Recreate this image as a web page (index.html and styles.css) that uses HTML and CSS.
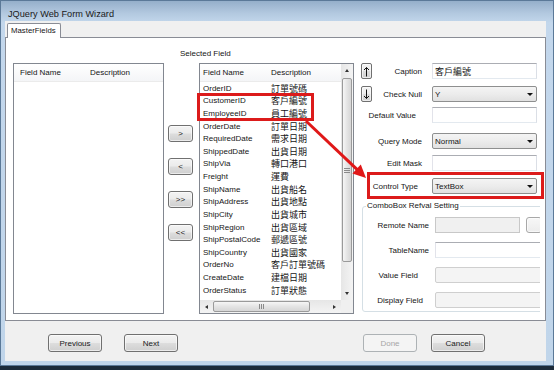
FILE: index.html
```html
<!DOCTYPE html>
<html>
<head>
<meta charset="utf-8">
<title>JQuery Web Form Wizard</title>
<link rel="stylesheet" href="styles.css">
</head>
<body>
<div class="window">
  <div class="titlebar">JQuery Web Form Wizard</div>
  <div class="client">
    <div class="tabstrip"><div class="tab">MasterFields</div></div>
    <div class="panel">
      <div class="listview left-list">
        <div class="lv-header left-cols"><span class="col1">Field Name</span><span class="col2">Description</span></div>
      </div>

      <div class="mid">
        <div class="sel-label">Selected Field</div>
        <div class="mid-row">
          <div class="move-btns">
            <div class="btn small">&gt;</div>
            <div class="btn small">&lt;</div>
            <div class="btn small">&gt;&gt;</div>
            <div class="btn small">&lt;&lt;</div>
          </div>
          <div class="listview sel-list">
            <div class="lv-main">
              <div class="lv-header sel-cols"><span class="col1">Field Name</span><span class="col2">Description</span></div>
              <div class="lv-row sel-cols"><span class="col1">OrderID</span><span class="col2 cjk">訂單號碼</span></div>
              <div class="lv-row sel-cols"><span class="col1">CustomerID</span><span class="col2 cjk">客戶編號</span></div>
              <div class="lv-row sel-cols"><span class="col1">EmployeeID</span><span class="col2 cjk">員工編號</span></div>
              <div class="lv-row sel-cols"><span class="col1">OrderDate</span><span class="col2 cjk">訂單日期</span></div>
              <div class="lv-row sel-cols"><span class="col1">RequiredDate</span><span class="col2 cjk">需求日期</span></div>
              <div class="lv-row sel-cols"><span class="col1">ShippedDate</span><span class="col2 cjk">出貨日期</span></div>
              <div class="lv-row sel-cols"><span class="col1">ShipVia</span><span class="col2 cjk">轉口港口</span></div>
              <div class="lv-row sel-cols"><span class="col1">Freight</span><span class="col2 cjk">運費</span></div>
              <div class="lv-row sel-cols"><span class="col1">ShipName</span><span class="col2 cjk">出貨船名</span></div>
              <div class="lv-row sel-cols"><span class="col1">ShipAddress</span><span class="col2 cjk">出貨地點</span></div>
              <div class="lv-row sel-cols"><span class="col1">ShipCity</span><span class="col2 cjk">出貨城市</span></div>
              <div class="lv-row sel-cols"><span class="col1">ShipRegion</span><span class="col2 cjk">出貨區域</span></div>
              <div class="lv-row sel-cols"><span class="col1">ShipPostalCode</span><span class="col2 cjk">郵遞區號</span></div>
              <div class="lv-row sel-cols"><span class="col1">ShipCountry</span><span class="col2 cjk">出貨國家</span></div>
              <div class="lv-row sel-cols"><span class="col1">OrderNo</span><span class="col2 cjk">客戶訂單號碼</span></div>
              <div class="lv-row sel-cols"><span class="col1">CreateDate</span><span class="col2 cjk">建檔日期</span></div>
              <div class="lv-row sel-cols"><span class="col1">OrderStatus</span><span class="col2 cjk">訂單狀態</span></div>
            </div>
            <div class="vscroll">
              <div class="sb-btn"><i class="tri up"></i></div>
              <div class="vtrack"><div class="vthumb"><span class="grip-h"></span></div></div>
              <div class="sb-btn"><i class="tri down"></i></div>
            </div>
            <div class="hscroll">
              <div class="sb-btn h"><i class="tri left"></i></div>
              <div class="htrack"><div class="hthumb"><span class="grip-v"></span></div></div>
              <div class="sb-btn h"><i class="tri right"></i></div>
            </div>
            <div class="corner"></div>
          </div>
        </div>
      </div>

      <div class="props">
        <div class="prow">
          <div class="plabel"><div class="btn arrowbtn"><svg width="7" height="11" viewBox="0 0 7 11"><path d="M3.5 1.5V10.5M1 4L3.5 1.5L6 4" stroke="#111" stroke-width="1" fill="none"/></svg></div><span>Caption</span></div>
          <div class="field textbox"><span class="cjk">客戶編號</span></div>
        </div>
        <div class="prow mt7">
          <div class="plabel"><div class="btn arrowbtn"><svg width="7" height="11" viewBox="0 0 7 11"><path d="M3.5 0.5V9.5M1 7L3.5 9.5L6 7" stroke="#111" stroke-width="1" fill="none"/></svg></div><span>Check Null</span></div>
          <div class="field combo"><span>Y</span><i class="caret"></i></div>
        </div>
        <div class="prow mt5">
          <div class="plabel pr6"><span>Default Value</span></div>
          <div class="field textbox"></div>
        </div>
        <div class="prow mt10">
          <div class="plabel mrneg3"><span>Query Mode</span></div>
          <div class="field combo"><span>Normal</span><i class="caret"></i></div>
        </div>
        <div class="prow mt6">
          <div class="plabel"><span>Edit Mask</span></div>
          <div class="field textbox"></div>
        </div>
        <div class="prow mt7">
          <div class="plabel pr4"><span>Control Type</span></div>
          <div class="field combo"><span>TextBox</span><i class="caret"></i></div>
        </div>

        <fieldset class="group">
          <legend>ComboBox Refval Setting</legend>
          <div class="grow first">
            <div class="glabel">Remote Name</div>
            <div class="gfield textbox disabled short"></div>
            <div class="btn dots"></div>
          </div>
          <div class="grow">
            <div class="glabel">TableName</div>
            <div class="gfield textbox wide"></div>
          </div>
          <div class="grow">
            <div class="glabel pr11">Value Field</div>
            <div class="gfield combo disabled wide"><span></span><i class="caret gray"></i></div>
          </div>
          <div class="grow">
            <div class="glabel pr6">Display Field</div>
            <div class="gfield combo disabled wide"><span></span><i class="caret gray"></i></div>
          </div>
        </fieldset>
      </div>
    </div>
    <div class="footer">
      <div class="btn wide">Previous</div>
      <div class="btn wide next">Next</div>
      <div class="btn wide done disabledbtn">Done</div>
      <div class="btn wide cancel">Cancel</div>
    </div>
  </div>
</div>

<svg class="annot" width="554" height="370" viewBox="0 0 554 370">
  <rect x="198.5" y="94.5" width="114" height="25" fill="none" stroke="#dc1b1b" stroke-width="3"/>
  <rect x="368.5" y="173.5" width="174" height="24" fill="none" stroke="#dc1b1b" stroke-width="3"/>
  <line x1="306" y1="121" x2="357.5" y2="169.8" stroke="#e01818" stroke-width="3"/>
  <polygon points="366,178 352.4,173.6 360.8,164.6" fill="#e01818"/>
</svg>
</body>
</html>
```

FILE: styles.css
```css
* { box-sizing: border-box; }
html, body { margin: 0; padding: 0; }
body {
  width: 554px;
  height: 370px;
  background: #1c2b3a;
  font-family: "Liberation Sans", Arial, sans-serif;
  font-size: 8px;
  color: #151515;
  position: relative;
  overflow: hidden;
}
.cjk {
  font-family: "Noto Sans CJK TC", "Noto Sans CJK SC", sans-serif;
  font-size: 9px;
}

/* window frame */
.window {
  width: 554px;
  height: 366px;
  border: 1px solid #5b7998;
  background: linear-gradient(#95afca 0px, #b2c8df 12px, #c3d7ec 22px, #c0d5ea 100%);
  display: flex;
  flex-direction: column;
}
.titlebar {
  height: 20px;
  padding: 7px 0 0 7px;
  font-size: 9.2px;
  line-height: 12px;
  color: #1a1a1a;
}
.client {
  margin: 0 7px 4px 4px;
  flex: 1;
  background: #f0f0f0;
  display: flex;
  flex-direction: column;
}

/* tabs */
.tabstrip {
  height: 16px;
  padding: 2px 0 0 2px;
  display: flex;
}
.tab {
  width: 54px;
  height: 15px;
  border: 1px solid #898c95;
  border-bottom: none;
  border-radius: 2px 2px 0 0;
  background: #fff;
  padding-left: 3px;
  font-size: 7.8px;
  line-height: 13px;
  position: relative;
  z-index: 1;
}
.panel {
  height: 284px;
  border: 1px solid #898c95;
  background: #fff;
  display: flex;
  align-items: flex-start;
  padding-left: 7px;
}

/* list views */
.listview {
  border: 1px solid #828790;
  background: #fff;
}
.left-list {
  width: 151px;
  height: 251px;
  margin-top: 25px;
}
.lv-header {
  height: 18px;
  display: flex;
  align-items: center;
  background: linear-gradient(#ffffff, #f4f5f7);
  border-bottom: 1px solid #ebebeb;
}
.left-cols { padding-left: 6px; }
.left-cols .col1 { width: 70px; }
.sel-cols { padding-left: 3px; }
.sel-cols .col1 { width: 68px; }
.lv-row {
  height: 12.62px;
  display: flex;
  align-items: center;
  white-space: nowrap;
}
.lv-row .col1 { flex: none; }

.mid {
  margin-left: 4px;
  display: flex;
  flex-direction: column;
}
.sel-label {
  height: 25px;
  padding: 11px 0 0 12px;
  line-height: 10px;
}
.mid-row {
  display: flex;
  gap: 6px;
}
.move-btns {
  width: 25px;
  display: flex;
  flex-direction: column;
  gap: 16px;
  padding-top: 62px;
}
.sel-list {
  width: 155px;
  height: 251px;
  display: grid;
  grid-template-columns: 1fr 12px;
  grid-template-rows: 1fr 13px;
}
.lv-main { overflow: hidden; }

/* scrollbars */
.vscroll {
  display: flex;
  flex-direction: column;
  background: linear-gradient(90deg, #e6e6e6, #f4f4f4);
}
.hscroll {
  display: flex;
  background: linear-gradient(#e6e6e6, #f4f4f4);
}
.corner { background: #f0f0f0; }
.sb-btn {
  height: 13px;
  display: flex;
  align-items: center;
  justify-content: center;
  flex: none;
}
.sb-btn.h { width: 13px; height: auto; }
.vtrack { flex: 1; padding: 1px 0 0 0; }
.vthumb {
  height: 184px;
  margin: 0 1px;
  border: 1px solid #9a9a9a;
  border-radius: 2px;
  background: linear-gradient(90deg, #f6f6f6, #e4e4e4 50%, #d6d6d6);
  display: flex;
  align-items: center;
  justify-content: center;
}
.grip-h {
  width: 6px;
  height: 5px;
  border-top: 1px solid #8a8a8a;
  border-bottom: 1px solid #8a8a8a;
  background: linear-gradient(transparent 1px, #8a8a8a 1px, #8a8a8a 2px, transparent 2px);
}
.htrack { flex: 1; padding: 1px 0 1px 0; }
.hthumb {
  width: 97px;
  height: 100%;
  border: 1px solid #9a9a9a;
  border-radius: 2px;
  background: linear-gradient(#f6f6f6, #e4e4e4 50%, #d6d6d6);
  display: flex;
  align-items: center;
  justify-content: center;
}
.grip-v {
  width: 5px;
  height: 5px;
  border-left: 1px solid #8a8a8a;
  border-right: 1px solid #8a8a8a;
  background: linear-gradient(90deg, transparent 1px, #8a8a8a 1px, #8a8a8a 2px, transparent 2px);
}
.tri { width: 0; height: 0; display: block; }
.tri.up { border-left: 2.5px solid transparent; border-right: 2.5px solid transparent; border-bottom: 3px solid #333; }
.tri.down { border-left: 2.5px solid transparent; border-right: 2.5px solid transparent; border-top: 3px solid #333; }
.tri.left { border-top: 2.5px solid transparent; border-bottom: 2.5px solid transparent; border-right: 3px solid #333; }
.tri.right { border-top: 2.5px solid transparent; border-bottom: 2.5px solid transparent; border-left: 3px solid #333; }

/* buttons */
.btn {
  border: 1px solid #707070;
  border-radius: 3px;
  background: linear-gradient(#f3f3f3 0%, #ebebeb 48%, #dddddd 52%, #cfcfcf 100%);
  display: flex;
  align-items: center;
  justify-content: center;
  color: #1a1a1a;
  box-shadow: inset 0 0 0 1px rgba(255,255,255,0.6);
}
.btn.small { height: 17px; font-size: 8px; }
.btn.wide { width: 54px; height: 18px; }
.btn.next { margin-left: 22px; }
.btn.done { margin-left: auto; }
.btn.cancel { margin-left: 14px; }
.disabledbtn {
  border-color: #adb2b5;
  background: #f4f4f4;
  color: #a6a6a6;
  box-shadow: none;
}
.footer {
  flex: 1;
  display: flex;
  align-items: flex-start;
  padding: 13px 61px 0 43px;
}

/* property form */
.props {
  width: 179px;
  margin-left: 7px;
  padding-top: 25px;
  overflow: hidden;
  height: 282px;
}
.prow {
  height: 16px;
  display: flex;
  align-items: center;
}
.mt5 { margin-top: 5px; }
.mt6 { margin-top: 6px; }
.mt7 { margin-top: 7px; }
.mt10 { margin-top: 10px; }
.plabel {
  width: 61px;
  flex: none;
  display: flex;
  align-items: center;
  justify-content: flex-end;
  white-space: nowrap;
}
.plabel .arrowbtn { margin-right: auto; }
.pr4 { padding-right: 4px; }
.pr6 { padding-right: 6px; }
.pr11 { padding-right: 11px; }
.mrneg3 { margin-right: -3px; }
.prow .mrneg3 + .field { margin-left: 13px; }
.arrowbtn {
  width: 11px;
  height: 16px;
  border-radius: 2px;
}
.field {
  width: 105px;
  height: 16px;
  margin-left: 10px;
  flex: none;
}
.textbox {
  border: 1px solid #abadb3;
  border-color: #abadb3 #dbdfe6 #e3e9ef #e2e3ea;
  background: #fff;
  display: flex;
  align-items: center;
  padding-left: 2px;
}
.combo {
  border: 1px solid #8e8f8f;
  border-radius: 2px;
  background: linear-gradient(#f4f4f4, #ececec 50%, #e1e1e1);
  display: flex;
  align-items: center;
  padding-left: 2px;
}
.combo span { flex: 1; }
.caret {
  width: 0;
  height: 0;
  border-left: 3px solid transparent;
  border-right: 3px solid transparent;
  border-top: 3px solid #111;
  margin-right: 3px;
}
.caret.gray { border-top-color: #a0a0a0; }

/* group box */
.group {
  margin: 7px 0 0 1px;
  padding: 0 0 3px 0;
  width: 200px;
  border: 1px solid #d5dfe5;
  border-radius: 3px;
  min-width: 0;
}
.group legend {
  padding: 0 1px;
  margin-left: 3px;
  line-height: 10px;
  font-size: 8px;
}
.grow {
  height: 16px;
  display: flex;
  align-items: center;
  margin-top: 9px;
}
.grow.first { margin-top: 6px; }
.glabel {
  width: 66px;
  flex: none;
  text-align: right;
  white-space: nowrap;
}
.gfield {
  height: 16px;
  margin-left: 6px;
  flex: none;
}
.gfield.short { width: 85px; }
.gfield.wide { width: 120px; }
.textbox.disabled {
  background: #f0f0f0;
  border-color: #c8c8c8;
}
.combo.disabled {
  background: #f4f4f4;
  border-color: #cfcfcf;
}
.btn.dots {
  width: 16px;
  height: 16px;
  margin-left: 6px;
  flex: none;
  border-color: #a8a8a8;
  background: linear-gradient(#f7f7f7, #ececec);
}

/* annotation overlay */
.annot {
  position: absolute;
  left: 0;
  top: 0;
  pointer-events: none;
}
```
